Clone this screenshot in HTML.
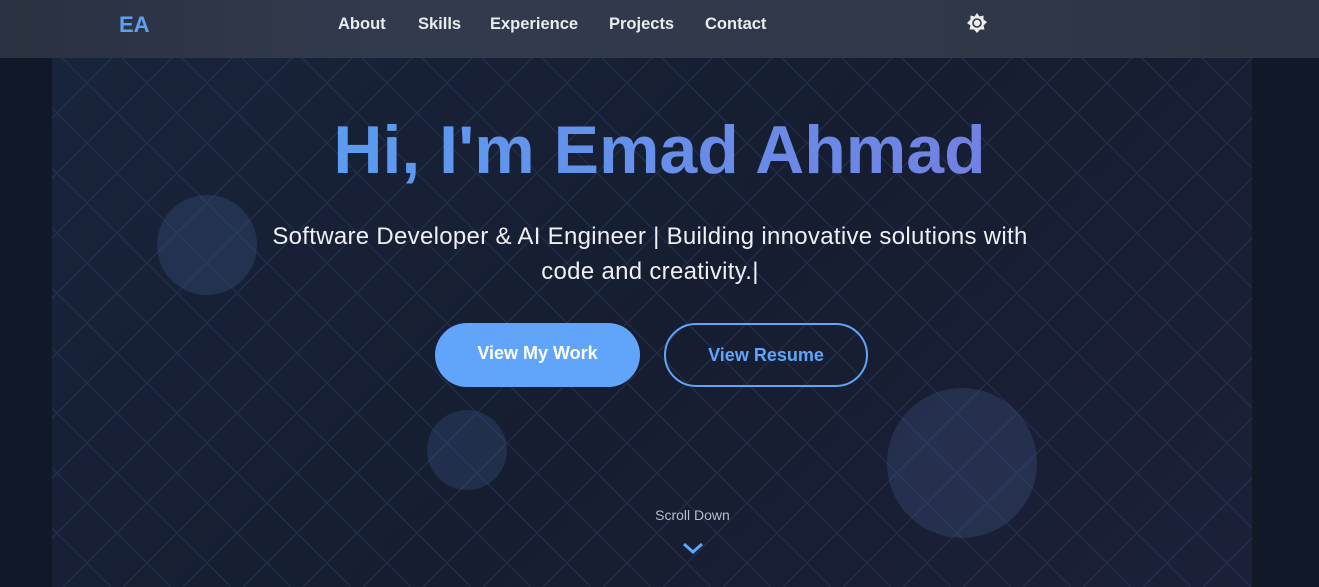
<!DOCTYPE html>
<html><head><meta charset="utf-8"><style>
*{margin:0;padding:0;box-sizing:border-box}
body{width:1319px;height:587px;overflow:hidden;background:#111827;font-family:"Liberation Sans",sans-serif;position:relative}
.hero{position:absolute;left:52px;top:58px;width:1200px;height:529px;background:linear-gradient(135deg,#18243b 0%,#161d30 50%,#1b2038 100%);overflow:hidden}
.grid{position:absolute;left:0;top:0}
.nav{position:absolute;left:0;top:0;width:1319px;height:58px;background:linear-gradient(90deg,#2a3140,#323b4e 30%,#2e3545)}
.logo{position:absolute;left:119px;top:12px;color:#5fa0f3;font-weight:bold;font-size:22px}
.nav a{position:absolute;top:15px;color:#e8ebf0;font-weight:bold;font-size:16.5px;text-decoration:none}
.c{position:absolute;border-radius:50%;background:rgba(60,90,140,.3)}
h1{position:absolute;left:0;width:1319px;top:111px;text-align:center;font-size:68px;letter-spacing:0;font-weight:bold;background:linear-gradient(90deg,#5b9cf0 25%,#7281e2 75%);-webkit-background-clip:text;color:transparent}
.sub{position:absolute;left:190px;width:920px;top:219px;text-align:center;color:#eef0f4;font-size:24px;letter-spacing:0.3px;line-height:35px}
.b1{position:absolute;left:435px;top:323px;width:205px;height:64px;border-radius:32px;background:#60a5fa;color:#fff;font-weight:bold;font-size:18px;text-align:center;line-height:60px}
.b2{position:absolute;left:664px;top:323px;width:204px;height:64px;border-radius:32px;border:2px solid #60a5fa;color:#60a5fa;font-weight:bold;font-size:18px;text-align:center;line-height:60px}
.sd{position:absolute;left:0;width:1385px;top:507px;text-align:center;color:#b8bcc6;font-size:14px}
</style></head><body>
<div class="hero"><svg class="grid" width="1200" height="529"><defs><pattern id="p" width="60" height="60" patternUnits="userSpaceOnUse" x="5" y="-5"><path d="M0 0L60 60M60 0L0 60" stroke="#2a3a5a" stroke-width="1.3" opacity=".55"/></pattern></defs><rect width="1200" height="529" fill="url(#p)"/></svg></div>
<div class="c" style="left:157px;top:195px;width:100px;height:100px"></div>
<div class="c" style="left:427px;top:410px;width:80px;height:80px"></div>
<div class="c" style="left:887px;top:388px;width:150px;height:150px;background:rgba(70,90,140,.3)"></div>
<div class="nav">
<div class="logo">EA</div>
<a style="left:338px">About</a><a style="left:418px">Skills</a><a style="left:490px">Experience</a><a style="left:609px">Projects</a><a style="left:705px">Contact</a>
<svg style="position:absolute;left:966px;top:12px" width="22" height="22" viewBox="0 0 22 22"><polygon fill="#eee" points="11,1 13.5,4.5 17.5,3.5 17.5,7.5 21,10 17.5,13.5 18.5,17.5 14,17.5 11,21 8,17.5 3.5,17.5 4.5,13.5 1,11 4.5,7.5 4.5,3.5 8.5,4.5"/><circle cx="11" cy="11" r="4" fill="none" stroke="#2e3647" stroke-width="1.6"/></svg>
</div>
<h1>Hi, I'm Emad Ahmad</h1>
<div class="sub">Software Developer &amp; AI Engineer | Building innovative solutions with<br>code and creativity.|</div>
<div class="b1">View My Work</div>
<div class="b2">View Resume</div>
<div class="sd">Scroll Down</div>
<svg style="position:absolute;left:682px;top:541px" width="22" height="14" viewBox="0 0 22 14"><polyline points="2,3 11,11 20,3" fill="none" stroke="#60a5fa" stroke-width="3"/></svg>
</body></html>
